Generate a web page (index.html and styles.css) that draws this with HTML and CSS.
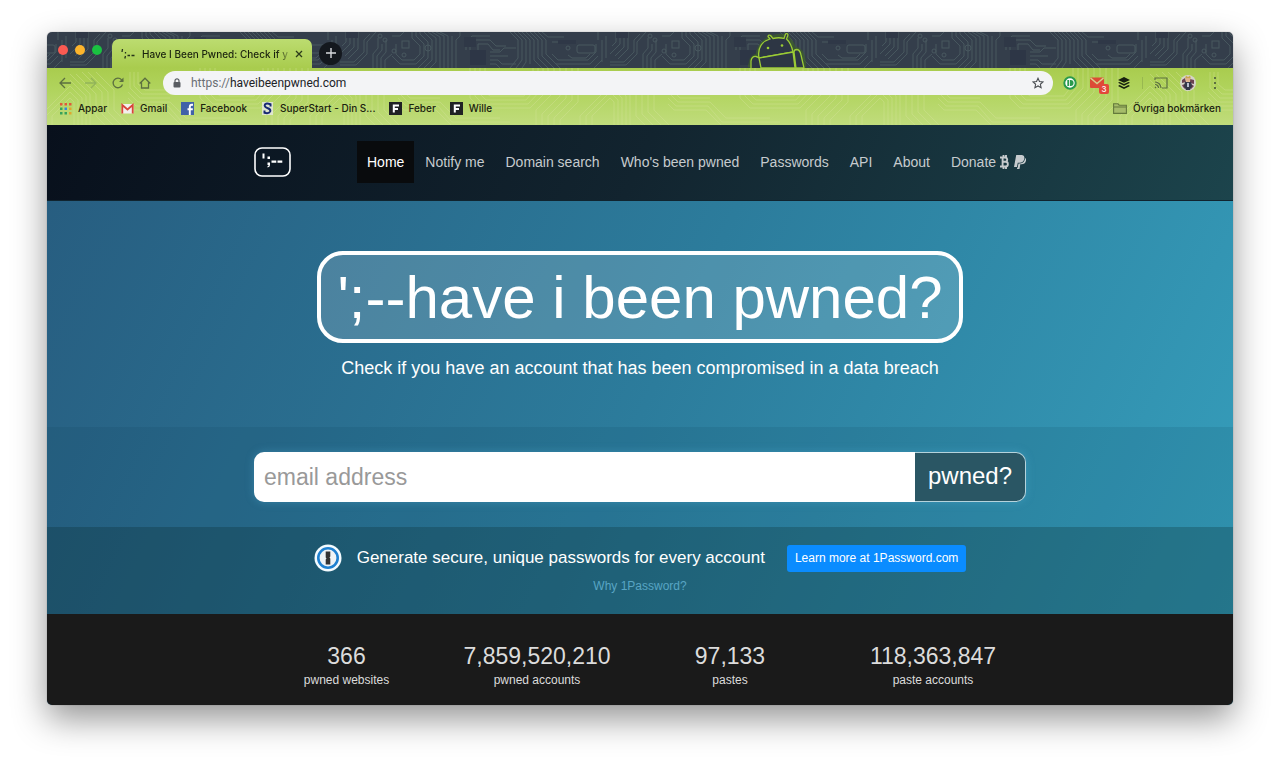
FILE: index.html
```html
<!DOCTYPE html>
<html lang="en">
<head>
<meta charset="utf-8">
<title>Have I Been Pwned: Check if your email has been compromised in a data breach</title>
<link rel="stylesheet" href="styles.css">
</head>
<body>
<div class="window">
  <header class="chrome">
    <div class="tabstrip">
      <svg class="circuit" width="100%" height="100%" aria-hidden="true">
        <defs>
          <pattern id="board" x="23" y="0" width="270" height="36" patternUnits="userSpaceOnUse">
            <g fill="none" stroke="#47575e" stroke-width="1">
              <path d="M0 30H14L24 20V8L30 2M0 33H16L27 22V10L36 0M8 27L18 17V0M5 24L14 15V0M0 22L10 12V0M2 14L6 10V0"/>
              <path d="M33 36V22L38 16V6M37 36V24L42 18V12M41 36V26L46 20V8M45 36V28L52 22"/>
              <rect x="62" y="9" width="7" height="7"/><path d="M52 4H60L64 0M72 0V6L80 14V22L74 28H62L56 22V12M76 0V4L84 12V24L76 32H60L52 24M80 0V2L88 10V26L78 36M84 0L92 8V28L84 36M88 0L96 6V30L90 36M92 0L100 5V36M96 0L104 4V36M100 0L108 4V36"/>
              <path d="M112 36V4M116 36V8L120 4V0M150 20H160L164 16H176M150 24H168M150 28H158L162 32H176M150 32H156L160 36M126 18V10L132 4H150M130 18V12L134 8H150L156 14H166M138 18V12H148L153 18H160"/>
              <path d="M170 0L178 8V26L170 36M174 0L182 8V28L176 36M178 0L186 8V30L182 36M182 0L190 8V32M186 0L194 8V28L202 36M190 0L198 8V26L208 36M194 0L202 8V24L214 36M198 0L206 8V22L220 36"/>
              <path d="M202 0L208 5H224M212 10H230M210 26L216 32H250L258 24M212 22L218 28H248L256 20V12M228 23L232 26H246L250 22"/>
              <rect x="237" y="13" width="18" height="8" rx="2"/>
              <path d="M262 8V30M266 4V26M258 0V8M254 36L262 28"/>
              <circle cx="88" cy="16" r="3"/><circle cx="40" cy="4" r="2"/><circle cx="54" cy="19" r="2"/><circle cx="64" cy="23" r="2"/><circle cx="45" cy="8" r="2"/><circle cx="228" cy="16" r="2"/>
            </g>
            <rect x="130" y="18" width="16" height="15" fill="#2d3646"/>
            <path d="M6 0H18V6H6ZM218 8H236V12H218ZM124 5H136V15H124Z" fill="#2f3847"/>
          </pattern>
        </defs>
        <rect width="100%" height="100%" fill="url(#board)"/>
      </svg>
      <div class="lights"><button class="light light-close" aria-label="Close"></button><button class="light light-min" aria-label="Minimise"></button><button class="light light-max" aria-label="Zoom"></button></div>
      <div class="tab">
        <svg class="favicon" width="14" height="12" viewBox="0 0 14 12" aria-hidden="true"><path d="M1.500 1L1 4M4.500 4V5.500M4.500 8L3.800 10.500M6.500 7.500H9M10.500 7.500H13.500" stroke="#26331b" stroke-width="1.300" fill="none"/></svg>
        <span class="tab-title">Have I Been Pwned: Check if y</span>
        <button class="icon-btn" aria-label="Close tab"><svg width="8" height="8" viewBox="0 0 8 8"><path d="M1 1L7 7M7 1L1 7" stroke="#2c3b1a" stroke-width="1.300"/></svg></button>
      </div>
      <button class="new-tab" aria-label="New tab"><svg width="10" height="10" viewBox="0 0 10 10"><path d="M5 0V10M0 5H10" stroke="#d8dade" stroke-width="1.400"/></svg></button>
      <svg class="droid" width="58" height="36" viewBox="0 0 58 36" aria-hidden="true">
        <path d="M3 36L5 28Q8 24 11 26Q11 12 24 7L21 5M24 7Q32 4 37 6L40 3M37 6Q44 11 45 19Q51 17 53 24L56 36" fill="none" stroke="#3d6327" stroke-width="7" opacity=".65"/>
        <g fill="#2d3644" stroke="#9bcb35" stroke-width="1.300">
          <path d="M11 26C9 15 15 9 22 7L20 4.500A1.500 1.500 0 0 1 22.500 3.500L25 6.500Q31 5 36 6.500L37.500 2A1.500 1.500 0 0 1 40 3L38.500 7Q43 11 45 20Z"/>
          <path d="M11 26L13 36H47L45 20ZM3 36V29Q4 24 8 24.500Q10 25 11 26L13 36M46 20Q46 17.500 49 17.500Q52 18 53 23L56 36H48Z"/>
        </g>
        <circle cx="20" cy="16" r="1.300" fill="#9bcb35"/><circle cx="34" cy="13.500" r="1.300" fill="#9bcb35"/>
      </svg>
    </div>

    <div class="toolbar">
      <svg class="circuit waves" width="100%" height="100%" aria-hidden="true">
        <defs>
          <pattern id="waves" x="23" y="0" width="270" height="58" patternUnits="userSpaceOnUse">
            <path fill="none" stroke="#d5e39a" stroke-width="1" d="M0 6L20 26V58M0 12L16 28V58M0 18L12 30V58M0 24L8 32V58M0 30L4 34V58M6 6L26 26V48L36 58M12 4L32 24V46L44 58M18 4L38 24V44L52 58M26 4L44 22V42L60 58M60 4V20L70 30H100M64 4V18L72 26H104M68 4V16L75 22H106M58 24L68 34H100L116 50H160M58 30L66 38H98L112 54H170M58 36L64 42H96L112 58M130 0V30L140 40H190L208 22V0M135 0V28L143 36H188L203 20V0M140 0V26L146 32H186L198 18V0M145 0V24L150 28H184L193 16V0M214 0V24L196 42V58M220 0V28L202 46V58M226 0V30L208 48V58M232 0V32L214 50V58M238 0V34L220 52V58M270 18L240 48V58M270 24L246 48V58M270 30L252 48V58"/>
          </pattern>
        </defs>
        <rect width="100%" height="100%" fill="url(#waves)"/>
      </svg>
      <div class="address-row">
        <button class="icon-btn" aria-label="Back"><svg width="12" height="12" viewBox="0 0 12 12"><path d="M12 6H1M6 1L1 6L6 11" fill="none" stroke="#5c7040" stroke-width="1.300"/></svg></button>
        <button class="icon-btn" aria-label="Forward"><svg width="12" height="12" viewBox="0 0 12 12"><path d="M0 6H11M6 1L11 6L6 11" fill="none" stroke="#92b45a" stroke-width="1.300"/></svg></button>
        <button class="icon-btn" aria-label="Reload"><svg width="12" height="12" viewBox="0 0 12 12"><path d="M10.500 7.500A4.800 4.800 0 1 1 9.600 2.800L11 4.300" fill="none" stroke="#5c7040" stroke-width="1.300"/><path d="M11.500 .5V5H7Z" fill="#5c7040"/></svg></button>
        <button class="icon-btn" aria-label="Home"><svg width="12" height="12" viewBox="0 0 12 12"><path d="M.7 6.500L6 1.200L11.300 6.500M2.500 5.500V11H9.500V5.500" fill="none" stroke="#5c7040" stroke-width="1.300"/></svg></button>
        <div class="omnibox">
          <svg width="8" height="10" viewBox="0 0 8 10" aria-hidden="true"><rect x=".5" y="4" width="7" height="5.500" rx="1" fill="#595d62"/><path d="M2 4.500V2.800A2 2 0 0 1 6 2.800V4.500" fill="none" stroke="#595d62" stroke-width="1.200"/></svg>
          <span class="url"><span class="scheme">https://</span>haveibeenpwned.com</span>
          <button class="icon-btn" aria-label="Bookmark this page"><svg width="12" height="12" viewBox="0 0 24 24"><path d="M12 2.500L14.900 9.100L22 9.800L16.700 14.500L18.200 21.500L12 17.900L5.800 21.500L7.300 14.500L2 9.800L9.100 9.100Z" fill="none" stroke="#4a4d52" stroke-width="2.200"/></svg></button>
        </div>
        <button class="icon-btn" aria-label="Pushbullet"><svg width="14" height="14" viewBox="0 0 14 14"><circle cx="7" cy="7" r="5.700" fill="#fff" stroke="#2a9a4c" stroke-width="2"/><path d="M4.300 4H6V10H4.300ZM6.800 4H7.600A3 3 0 0 1 7.600 10H6.800Z" fill="#2a9a4c"/></svg></button>
        <button class="icon-btn mail-btn" aria-label="Gmail checker, 3 unread"><svg width="14" height="12" viewBox="0 0 14 12"><rect y=".5" width="14" height="10.500" rx="1" fill="#dc4b36"/><path d="M.5 1L7 6.500L13.500 1" fill="none" stroke="#d6cf8a" stroke-width="1.600"/></svg><span class="badge">3</span></button>
        <button class="icon-btn" aria-label="Buffer"><svg width="12" height="12" viewBox="0 0 12 12"><path d="M6 0L12 2.900L6 5.700L0 2.900ZM1.600 5L6 7.100L10.400 5L12 5.800L6 8.700L0 5.800ZM1.600 8.100L6 10.200L10.400 8.100L12 8.900L6 11.900L0 8.900Z" fill="#18200f"/></svg></button>
        <span class="divider"></span>
        <button class="icon-btn" aria-label="Cast"><svg width="14" height="12" viewBox="0 0 14 12"><path d="M1 3V1H13V11H8M1 5A6 6 0 0 1 7 11M1 7.500A3.500 3.500 0 0 1 4.500 11M1 10L2 11" fill="none" stroke="#5c7040" stroke-width="1.200"/></svg></button>
        <button class="icon-btn" aria-label="Profile"><svg width="16" height="16" viewBox="0 0 16 16"><circle cx="8" cy="8" r="8" fill="#d5d3cb"/><path d="M2 5L5 3L6 7L2 8ZM10 4L14 5L14 9L10 8ZM2 10L5 9L5 14L3 12ZM11 9L14 11L11 14Z" fill="#6b4250"/><path d="M5 7H11L12 11L10 15H6L4 11Z" fill="#34374a"/><circle cx="8" cy="4.800" r="2.400" fill="#e0b18c"/><path d="M5 3.500L6 .8L8 2L10 .8L11 3.500L8 3Z" fill="#caa44c"/><path d="M7 8H9V12H7Z" fill="#b9bed0"/></svg></button>
        <button class="icon-btn" aria-label="Menu"><svg width="4" height="12" viewBox="0 0 4 12"><path d="M1 0H3V2H1ZM1 5H3V7H1ZM1 10H3V12H1Z" fill="#5c7040"/></svg></button>
      </div>
      <nav class="bookmarks" aria-label="Bookmarks">
        <a href="#"><svg width="13" height="13" viewBox="0 0 13 13"><path d="M1 1H3.500V3.500H1ZM5.500 1H8V3.500H5.500ZM10 1H12.500V3.500H10Z" fill="#e05a3a"/><path d="M1 5.500H3.500V8H1Z" fill="#37a35a"/><path d="M5.500 5.500H8V8H5.500Z" fill="#3a86d8"/><path d="M10 5.500H12.500V8H10ZM10 10H12.500V12.500H10Z" fill="#dfa72e"/><path d="M1 10H3.500V12.500H1ZM5.500 10H8V12.500H5.500Z" fill="#37a35a"/></svg>Appar</a>
        <a href="#"><svg width="13" height="13" viewBox="0 0 13 13"><rect x=".5" y="2" width="12" height="9.500" rx="1" fill="#f3efec"/><path d="M1.300 11.500V3L6.500 7.500L11.700 3V11.500" fill="none" stroke="#d8463a" stroke-width="1.800"/></svg>Gmail</a>
        <a href="#"><svg width="13" height="13" viewBox="0 0 13 13"><rect width="13" height="13" fill="#4162a8"/><path d="M8.800 13V5Q8.800 2.700 11 2.700H12M6.500 7.200H11.800" fill="none" stroke="#fff" stroke-width="1.900"/></svg>Facebook</a>
        <a href="#"><svg width="13" height="13" viewBox="0 0 13 13"><rect x="1" width="11" height="13" fill="#dfe6cf"/><path d="M9.500 4.500V2.200Q3.500 .5 3.700 3.700Q4 5.500 6.800 6.200Q9.800 7.200 9.200 9.300Q8 12 3.500 10.800V8.500" fill="none" stroke="#182a74" stroke-width="2"/></svg>SuperStart - Din S...</a>
        <a href="#"><svg width="13" height="13" viewBox="0 0 13 13"><rect width="13" height="13" fill="#202224"/><path d="M4.800 10.500V3.500H10M4.800 7H9" fill="none" stroke="#fff" stroke-width="2"/></svg>Feber</a>
        <a href="#"><svg width="13" height="13" viewBox="0 0 13 13"><rect width="13" height="13" fill="#202224"/><path d="M4.800 10.500V3.500H10M4.800 7H9" fill="none" stroke="#fff" stroke-width="2"/></svg>Wille</a>
        <a class="other" href="#"><svg width="14" height="11" viewBox="0 0 14 11"><path d="M.6 10.400V.8H5L6.200 2.200H13.400V10.400ZM.6 4H13.400" fill="#a6bd6a" stroke="#647a3b" stroke-width="1.100"/></svg>Övriga bokmärken</a>
      </nav>
    </div>
  </header>

  <main class="site">
    <nav class="site-nav" aria-label="Main">
      <div class="container nav-row">
        <a class="logo" href="#" aria-label="Home page"><svg width="38" height="30" viewBox="0 0 38 30"><rect x="1" y="1" width="35" height="28" rx="7" fill="none" stroke="#fff" stroke-width="1.600"/><path d="M9.500 6.500V11.500" stroke="#fff" stroke-width="2"/><path d="M13.500 9.500H16V12H13.500ZM13.500 15.500H16V18Q16 20 13.500 20.500V19.300Q14.700 19 14.700 18H13.500ZM17.500 13.500H22.300V15.700H17.500ZM23.500 13.500H28.300V15.700H23.500Z" fill="#fff"/></svg></a>
        <ul class="menu">
          <li><a class="active" href="#">Home</a></li>
          <li><a href="#">Notify me</a></li>
          <li><a href="#">Domain search</a></li>
          <li><a href="#">Who's been pwned</a></li>
          <li><a href="#">Passwords</a></li>
          <li><a href="#">API</a></li>
          <li><a href="#">About</a></li>
          <li><a class="donate" href="#">Donate <svg width="10" height="14" viewBox="0 0 10 14"><path d="M0 2.500H5.500A2.200 2.200 0 0 1 5.500 6.800H2.500M5.500 6.800A2.300 2.300 0 0 1 5.500 11.500H0M2.600 2.500V11.500M3.500 0V2.500M6 0V2.500M3.500 11.500V14M6 11.500V14" fill="none" stroke="currentColor" stroke-width="1.900"/></svg><svg width="12" height="14" viewBox="0 0 12 14"><path d="M2.200 0H7.500Q11 .3 10.300 4Q9.500 7.700 5.500 7.700H3.800L2.900 12H0Z" fill="currentColor"/><path d="M11.200 3Q12.400 4 11.900 6Q11 9.300 7.500 9.300H6.300L5.500 14H2.900L3.200 12.700H3.600L4.500 8.400H6Q10.500 8.400 11.200 3Z" fill="currentColor"/></svg></a></li>
        </ul>
      </div>
    </nav>

    <section class="hero">
      <h1>';--have i been pwned?</h1>
      <p>Check if you have an account that has been compromised in a data breach</p>
    </section>

    <section class="search">
      <form class="container search-form">
        <input type="email" aria-label="email address" placeholder="email address">
        <button type="button">pwned?</button>
      </form>
    </section>

    <section class="promo">
      <div class="promo-row">
        <svg width="28" height="28" viewBox="0 0 28 28" aria-hidden="true"><circle cx="14" cy="14" r="13.500" fill="#f4fbff"/><circle cx="14" cy="14" r="9.700" fill="#eef3f6" stroke="#1f80d0" stroke-width="2.600"/><path d="M11.700 7.500H16.300V12.500L15.500 13.500L16.300 14.500V20.500H11.700V15.500L12.500 14.500L11.700 13.500Z" fill="#333"/></svg>
        <span class="promo-text">Generate secure, unique passwords for every account</span>
        <a class="promo-btn" href="#">Learn more at 1Password.com</a>
      </div>
      <a class="why" href="#">Why 1Password?</a>
    </section>

    <section class="stats">
      <dl class="stats-grid">
        <div><dd>366</dd><dt>pwned websites</dt></div>
        <div><dd>7,859,520,210</dd><dt>pwned accounts</dt></div>
        <div><dd>97,133</dd><dt>pastes</dt></div>
        <div><dd>118,363,847</dd><dt>paste accounts</dt></div>
      </dl>
    </section>
  </main>
</div>
</body>
</html>
```
FILE: styles.css
```css
* {
  box-sizing: border-box;
}

body {
  margin: 0;
  padding: 32px 47px 62px;
  background: #fff;
  font-family: "Liberation Sans", Arial, sans-serif;
}

a {
  color: inherit;
  text-decoration: none;
}

button {
  border: 0;
  padding: 0;
  background: none;
  font: inherit;
}

svg {
  display: block;
  flex: none;
}

.window {
  border-radius: 5px;
  overflow: hidden;
  box-shadow: 0 0 1px rgba(0, 0, 0, .5), 0 14px 34px rgba(0, 0, 0, .42);
}

/* Browser chrome */

.chrome {
  font-family: Inter, Roboto, sans-serif;
  font-size: 10px;
  font-weight: 500;
  color: #1b230f;
}

.circuit {
  position: absolute;
  inset: 0;
}

.waves {
  opacity: .4;
}

.tabstrip {
  position: relative;
  display: flex;
  align-items: flex-end;
  height: 36px;
  padding-left: 11px;
  background: #343e4b;
}

.lights {
  position: relative;
  display: flex;
  align-self: center;
  gap: 7px;
}

.light {
  width: 10px;
  height: 10px;
  border-radius: 50%;
}

.light-close {
  background: #fb5a52;
}

.light-min {
  background: #fdb42c;
}

.light-max {
  background: #1ac141;
}

.tab {
  position: relative;
  display: flex;
  align-items: center;
  gap: 7px;
  width: 200px;
  height: 29px;
  margin-left: 10px;
  padding: 0 9px;
  border-radius: 7px 7px 0 0;
  background: linear-gradient(#bcdc70, #a9cc4e);
}

.tab-title {
  flex: 1;
  white-space: nowrap;
  mask-image: linear-gradient(90deg, #000 92%, rgba(0, 0, 0, .3));
}

.new-tab {
  position: relative;
  display: flex;
  align-items: center;
  justify-content: center;
  align-self: center;
  width: 23px;
  height: 23px;
  margin: 6px 0 0 7px;
  border-radius: 50%;
  background: #14181e;
}

.droid {
  position: absolute;
  left: 701px;
  bottom: 0;
}

.toolbar {
  position: relative;
  padding: 3px 12px 4px;
  background: linear-gradient(#a9cc4e, #b1d45e 40%, #c0dc7c);
}

.address-row {
  position: relative;
  display: flex;
  align-items: center;
  height: 24px;
}

.icon-btn {
  position: relative;
  display: flex;
  flex: none;
  align-items: center;
  justify-content: center;
}

.address-row > .icon-btn {
  width: 27px;
}

.address-row > .icon-btn:first-child {
  width: 12px;
  margin-right: 6px;
}

.omnibox {
  display: flex;
  flex: 1;
  align-items: center;
  gap: 10px;
  height: 24px;
  margin: 0 3px 0 5px;
  padding: 0 9px 0 10px;
  border-radius: 12px;
  background: #f3f4f6;
  font: 12px Roboto, Inter, sans-serif;
}

.url {
  flex: 1;
  color: #202226;
}

.scheme {
  color: #6a6e74;
}

.badge {
  position: absolute;
  right: 1px;
  bottom: -5px;
  width: 10px;
  border-radius: 2px;
  background: #e2493a;
  color: #fff;
  font-size: 8px;
  line-height: 10px;
}

.divider {
  width: 1px;
  height: 12px;
  margin: 0 4px 0 5px;
  background: #98b850;
}

.address-row > .icon-btn:last-child {
  margin-right: -7px;
}

.bookmarks {
  position: relative;
  display: flex;
  align-items: center;
  gap: 14px;
  height: 26px;
}

.bookmarks a {
  display: flex;
  align-items: center;
  gap: 6px;
  white-space: nowrap;
}

.bookmarks .other {
  margin-left: auto;
}

/* Site */

.site {
  background: linear-gradient(115deg, #275c7f, #2c7c9c 50%, #36a0bd);
  color: #fff;
}

.container {
  max-width: 772px;
  margin: 0 auto;
}

.site-nav {
  padding: 16px 0 17px;
  border-bottom: 1px solid #10242f;
  background: linear-gradient(115deg, #08101c, #12242f 50%, #1c444c);
}

.nav-row {
  display: flex;
  align-items: center;
}

.menu {
  display: flex;
  gap: 1px;
  margin: 0 -12px 0 65px;
  padding: 0;
  list-style: none;
}

.menu a {
  display: block;
  padding: 0 10px;
  font-size: 14px;
  line-height: 42px;
  color: #c6cbce;
  white-space: nowrap;
}

.menu .active {
  background: #090b0d;
  color: #fff;
}

.menu .donate {
  display: flex;
  align-items: center;
  gap: 4px;
}

.hero {
  padding: 50px 0 47px;
  text-align: center;
}

.hero h1 {
  width: fit-content;
  margin: 0 auto 13px;
  padding: 2px 16px 0;
  border: 4px solid #fff;
  border-radius: 26px;
  background: rgba(255, 255, 255, .16);
  font-size: 60px;
  font-weight: 400;
  line-height: 82px;
}

.hero p {
  margin: 0;
  font-size: 18px;
  line-height: 24px;
}

.search {
  padding: 25px 0;
  background: rgba(10, 60, 80, .12);
}

.search-form {
  display: flex;
  border-radius: 10px;
  box-shadow: 0 0 8px rgba(90, 180, 220, .35);
}

.search-form input {
  flex: 1;
  min-width: 0;
  height: 50px;
  padding: 0 10px;
  border: 0;
  border-radius: 10px 0 0 10px;
  background: #fff;
  font: 23px "Liberation Sans", Arial, sans-serif;
}

.search-form input::placeholder {
  color: #999;
}

.search-form button {
  width: 111px;
  padding-bottom: 2px;
  border: 1px solid #b5d3dc;
  border-left: 0;
  border-radius: 0 10px 10px 0;
  background: #2a5664;
  color: #fff;
  font-size: 24px;
}

.promo {
  display: flex;
  flex-direction: column;
  align-items: center;
  gap: 5px;
  padding: 17px 0 19px;
  background: rgba(6, 40, 48, .34);
}

.promo-row {
  display: flex;
  align-items: center;
}

.promo-text {
  margin: 0 22px 0 15px;
  font-size: 17px;
}

.promo-btn {
  padding: 0 8px;
  border-radius: 3px;
  background: #0a8cff;
  font-size: 12px;
  line-height: 27px;
}

.why {
  color: #58a5c4;
  font-size: 12px;
  line-height: 18px;
}

.stats {
  padding: 28px 0 15px;
  background: #1a1a1a;
  color: #dcdcdc;
}

.stats-grid {
  display: grid;
  grid-template-columns: 185fr 196fr 190fr 216fr;
  max-width: 802px;
  margin: 0 auto;
  padding-left: 15px;
  text-align: center;
}

.stats-grid dd {
  margin: 0;
  font-size: 23px;
  line-height: 28px;
}

.stats-grid dt {
  font-size: 12px;
  line-height: 20px;
}
```
